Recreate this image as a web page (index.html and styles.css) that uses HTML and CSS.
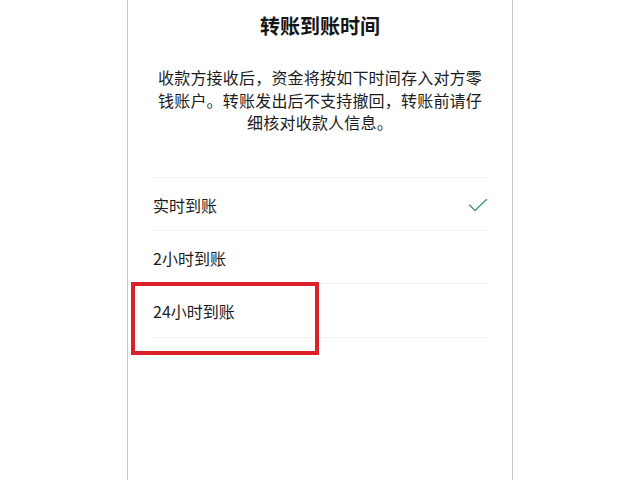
FILE: index.html
```html
<!DOCTYPE html>
<html lang="zh-CN">
<head>
  <meta charset="UTF-8">
  <title>转账到账时间</title>
  <meta name="viewport" content="width=device-width, initial-scale=1.0">
  <link rel="stylesheet" href="styles.css">
</head>
<body>
  <div class="sheet">
    <h1 class="title">转账到账时间</h1>
    <p class="desc">收款方接收后，资金将按如下时间存入对方零钱账户。转账发出后不支持撤回，转账前请仔细核对收款人信息。</p>
    <ul class="options">
      <li class="option">
        <span>实时到账</span>
        <svg class="check" width="20" height="14" viewBox="0 0 20 14">
          <path d="M1.5 7 L7 12.5 L18.5 1.5" fill="none" stroke="#4b9a7c" stroke-width="1.6" stroke-linecap="round" stroke-linejoin="round"/>
        </svg>
      </li>
      <li class="option"><span>2小时到账</span></li>
      <li class="option"><span>24小时到账</span></li>
    </ul>
  </div>
  <div class="highlight"></div>
</body>
</html>
```

FILE: styles.css
```css
html, body {
  margin: 0;
  padding: 0;
  background: #fff;
  height: 100%;
  overflow: hidden;
}
body {
  font-family: "Noto Sans CJK SC", "Noto Sans", sans-serif;
  color: #1b1b1b;
  display: flex;
  justify-content: center;
  position: relative;
}
.sheet {
  width: 384px;
  height: 100%;
  border-left: 1px solid #c9c9c9;
  border-right: 1px solid #c9c9c9;
  padding-top: 13px;
  box-sizing: content-box;
}
.title {
  margin: 0;
  font-size: 20px;
  line-height: 26px;
  font-weight: 700;
  text-align: center;
  color: #161616;
}
.desc {
  margin: 27px 0 0;
  padding: 0 29px;
  font-size: 16px;
  line-height: 22.5px;
  letter-spacing: 0.2px;
  text-align: center;
}
.options {
  list-style: none;
  margin: 43px 24px 0 25px;
  padding: 0;
  border-bottom: 1px solid #efefef;
}
.option {
  height: 53.4px;
  border-top: 1px solid #efefef;
  display: flex;
  align-items: center;
  justify-content: space-between;
  font-size: 16px;
  padding-top: 2px;
  box-sizing: border-box;
}
.highlight {
  position: absolute;
  left: 131px;
  top: 282px;
  width: 188px;
  height: 73px;
  border: 4px solid #dc2029;
  box-sizing: border-box;
}
```
